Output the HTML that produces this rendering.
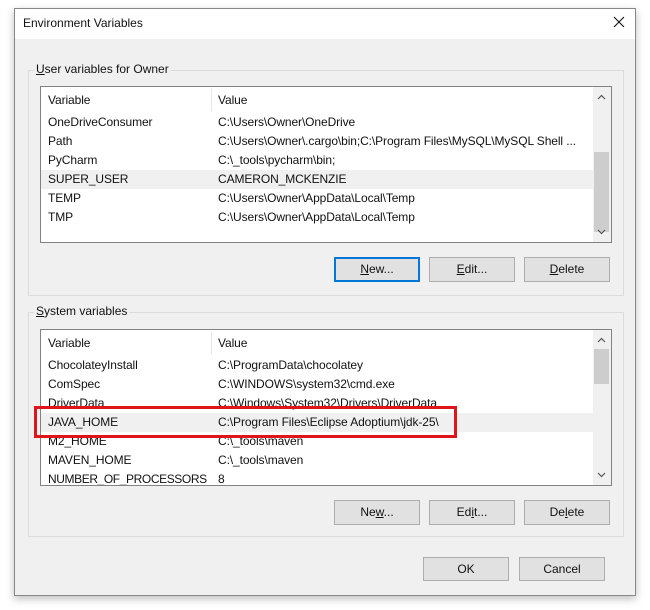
<!DOCTYPE html>
<html><head><style>
*{box-sizing:border-box;margin:0;padding:0}
body{width:650px;height:610px;background:#fff;position:relative;overflow:hidden;font-family:"Liberation Sans",sans-serif;font-size:12px;color:#111}
.a{position:absolute}
.win{left:14px;top:8px;width:622px;height:588px;border:1px solid #888;background:#f0f0f0;box-shadow:0 3px 8px rgba(0,0,0,.25)}
.title{left:0;top:0;width:620px;height:30px;background:#fff}
.grp{border:1px solid #dcdcdc}
.lbl{background:#f0f0f0;padding:0 2px}
.list{background:#fff;border:1px solid #828282}
.btn{background:#e1e1e1;border:1px solid #adadad;text-align:center;line-height:22px}
.row{position:absolute;left:0;width:552px;height:19px;line-height:19px}
.row span{position:absolute;left:7px;letter-spacing:-0.1px}
.row span+span{left:177px}
.sb{background:#f0f0f0}
.th{background:#cdcdcd}
</style></head><body>
<div class="a win">
 <div class="a title"></div>
 <div class="a" style="left:8px;top:7px;font-size:12px">Environment Variables</div>
 <svg class="a" style="left:598px;top:7px" width="12" height="12" viewBox="0 0 12 12"><path d="M1 1L11 11M11 1L1 11" stroke="#111" stroke-width="1.1"/></svg>
</div>

<div class="a grp" style="left:28px;top:70px;width:596px;height:226px"></div>
<div class="a lbl" style="left:34px;top:62px"><u>U</u>ser variables for Owner</div>
<div class="a list" style="left:40px;top:86px;width:572px;height:157px">
 <div class="row" style="top:4px"><span>Variable</span><span>Value</span></div>
 <div class="a" style="left:170px;top:2px;width:1px;height:22px;background:#e5e5e5"></div>
 <div class="row" style="top:26px"><span>OneDriveConsumer</span><span>C:\Users\Owner\OneDrive</span></div>
 <div class="row" style="top:45px"><span>Path</span><span>C:\Users\Owner\.cargo\bin;C:\Program Files\MySQL\MySQL Shell ...</span></div>
 <div class="row" style="top:64px"><span>PyCharm</span><span>C:\_tools\pycharm\bin;</span></div>
 <div class="row" style="top:83px;background:#f0f0f0"><span>SUPER_USER</span><span>CAMERON_MCKENZIE</span></div>
 <div class="row" style="top:102px"><span>TEMP</span><span>C:\Users\Owner\AppData\Local\Temp</span></div>
 <div class="row" style="top:121px"><span>TMP</span><span>C:\Users\Owner\AppData\Local\Temp</span></div>
 <div class="a sb" style="left:552px;top:0;width:18px;height:155px"></div>
 <div class="a th" style="left:553px;top:65px;width:15px;height:80px"></div>
 <svg class="a" style="left:556px;top:7px" width="9" height="6"><path d="M1 5L4.5 1.5L8 5" stroke="#555" fill="none" stroke-width="1.2"/></svg>
 <svg class="a" style="left:556px;top:142px" width="9" height="6"><path d="M1 1L4.5 4.5L8 1" stroke="#555" fill="none" stroke-width="1.2"/></svg>
</div>
<div class="a btn" style="left:334px;top:257px;width:86px;height:25px;border:2px solid #0078d7;line-height:21px"><u>N</u>ew...</div>
<div class="a btn" style="left:429px;top:257px;width:86px;height:25px"><u>E</u>dit...</div>
<div class="a btn" style="left:524px;top:257px;width:86px;height:25px"><u>D</u>elete</div>

<div class="a grp" style="left:28px;top:312px;width:596px;height:225px"></div>
<div class="a lbl" style="left:34px;top:304px"><u>S</u>ystem variables</div>
<div class="a list" style="left:40px;top:329px;width:572px;height:157px">
 <div class="row" style="top:4px"><span>Variable</span><span>Value</span></div>
 <div class="a" style="left:170px;top:2px;width:1px;height:22px;background:#e5e5e5"></div>
 <div class="row" style="top:26px"><span>ChocolateyInstall</span><span>C:\ProgramData\chocolatey</span></div>
 <div class="row" style="top:45px"><span>ComSpec</span><span>C:\WINDOWS\system32\cmd.exe</span></div>
 <div class="row" style="top:64px"><span>DriverData</span><span>C:\Windows\System32\Drivers\DriverData</span></div>
 <div class="row" style="top:83px;background:#f0f0f0"><span>JAVA_HOME</span><span>C:\Program Files\Eclipse Adoptium\jdk-25\</span></div>
 <div class="row" style="top:102px"><span>M2_HOME</span><span>C:\_tools\maven</span></div>
 <div class="row" style="top:121px"><span>MAVEN_HOME</span><span>C:\_tools\maven</span></div>
 <div class="row" style="top:140px;height:15px;overflow:hidden"><span style="letter-spacing:-0.4px">NUMBER_OF_PROCESSORS</span><span>8</span></div>
 <div class="a sb" style="left:552px;top:0;width:18px;height:155px"></div>
 <div class="a th" style="left:553px;top:19px;width:15px;height:35px"></div>
 <svg class="a" style="left:556px;top:7px" width="9" height="6"><path d="M1 5L4.5 1.5L8 5" stroke="#555" fill="none" stroke-width="1.2"/></svg>
 <svg class="a" style="left:556px;top:142px" width="9" height="6"><path d="M1 1L4.5 4.5L8 1" stroke="#555" fill="none" stroke-width="1.2"/></svg>
</div>
<div class="a" style="left:34px;top:406px;width:423px;height:32px;border:3px solid #e0141b"></div>
<div class="a btn" style="left:334px;top:500px;width:86px;height:25px">Ne<u>w</u>...</div>
<div class="a btn" style="left:429px;top:500px;width:86px;height:25px">Ed<u>i</u>t...</div>
<div class="a btn" style="left:524px;top:500px;width:86px;height:25px">De<u>l</u>ete</div>

<div class="a btn" style="left:423px;top:557px;width:86px;height:24px">OK</div>
<div class="a btn" style="left:519px;top:557px;width:86px;height:24px">Cancel</div>
</body></html>
